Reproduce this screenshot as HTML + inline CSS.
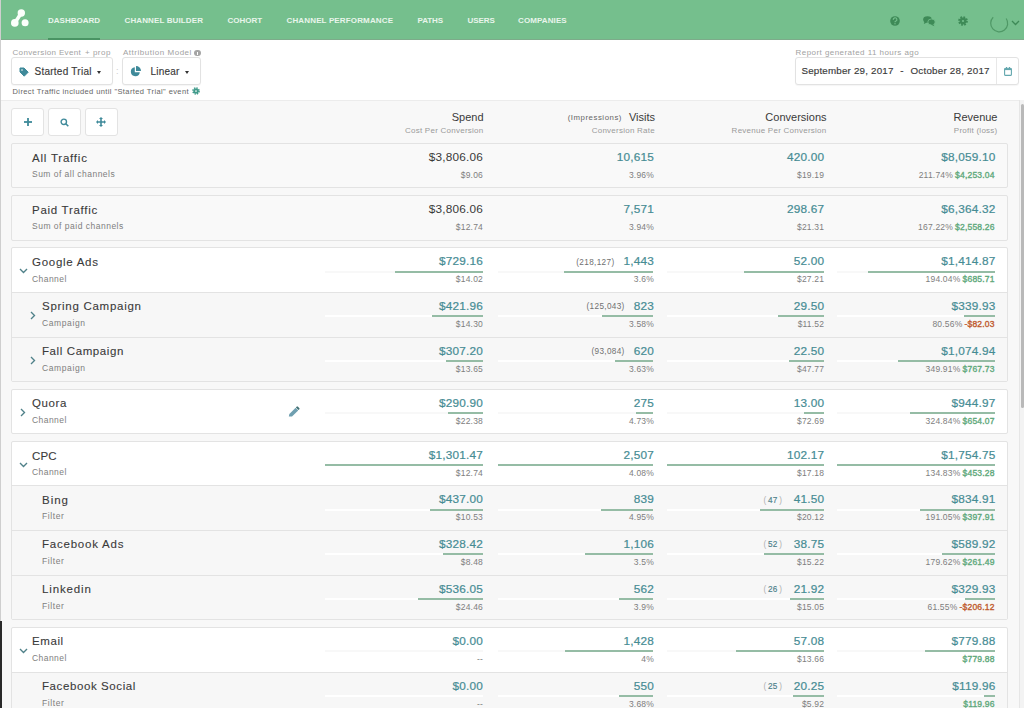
<!DOCTYPE html>
<html><head><meta charset="utf-8"><style>
*{box-sizing:border-box}
html,body{margin:0;padding:0}
body{width:1024px;height:708px;overflow:hidden;position:relative;background:#f8f8f8;font-family:"Liberation Sans",sans-serif;color:#3a3a3a}
div{position:absolute;white-space:nowrap}
svg{display:block}
.nav{left:0;top:0;width:1024px;height:40px;background:#75bf8d;border-bottom:1px solid #7dab8a}
.navi{top:13.5px;font-size:8px;font-weight:700;color:#e8f5eb;line-height:14px}
.hdr{left:0;top:40px;width:1024px;height:61px;background:#fff;border-bottom:1px solid #ececec}
.lbl{font-size:8px;color:#a2a2a2;line-height:10px}
.box{background:#fff;border:1px solid #e2e2e2;border-radius:3px;box-shadow:0 1px 1px rgba(0,0,0,.04)}
.card{left:11px;width:997px;border:1px solid #e3e3e3;border-radius:2px}
.sep{left:12px;width:995px;height:1px;background:#e3e3e3}
.subbg{left:12px;width:995px;background:#f7f7f7}
.title{font-size:11.5px;letter-spacing:0.78px;line-height:14px;color:#3a3a3a;-webkit-text-stroke:0.1px #3a3a3a}
.subt{font-size:8.5px;letter-spacing:0.4px;line-height:11px;color:#7e7e7e}
.val{font-size:11.8px;letter-spacing:0.2px;line-height:14px;text-align:right;-webkit-text-stroke:0.2px currentColor}
.pre{font-size:8.2px;color:#707070;letter-spacing:0.35px;margin-right:9px;position:relative;top:-0.5px;-webkit-text-stroke:0}
.pre2{font-size:8.2px;color:#4d7f8a;letter-spacing:0.3px;margin-right:10px;position:relative;top:-0.5px;-webkit-text-stroke:0.15px #4d7f8a}
.pre2 i{font-style:normal;color:#b0b0b0;-webkit-text-stroke:0;margin:0 1.5px}
.small{font-size:8.5px;letter-spacing:0.2px;line-height:11px;color:#7e7e7e;text-align:right}
.small b{font-weight:400;-webkit-text-stroke:0.35px currentColor}
.track{height:2px}
.bar{height:2px;background:#95bca5}
.chev{line-height:0}
.btn{top:108px;width:33px;height:27.5px;background:#fff;border:1px solid #e3e3e3;border-radius:3px}
.sel{top:64.5px;font-size:10px;color:#3a3a3a;line-height:14px;-webkit-text-stroke:0.15px #3a3a3a}
.ch{font-size:11px;color:#3a3a3a;line-height:14px;text-align:right}
.chs{top:125.5px;font-size:8px;color:#9a9a9a;line-height:10px;text-align:right;letter-spacing:0.25px}
</style></head><body>
<div class="nav"></div>
<div style="left:48px;top:38.3px;width:52px;height:2px;background:#4a9463"></div>
<div style="left:6px;top:4px"><svg width="30" height="30" viewBox="0 0 30 30"><line x1="15.3" y1="9" x2="8.8" y2="18.9" stroke="#fbfffb" stroke-width="3.6"/><circle cx="15.3" cy="9" r="3.7" fill="#fbfffb"/><circle cx="8.8" cy="18.9" r="3.8" fill="#fbfffb"/><circle cx="19.1" cy="18.7" r="3.5" fill="#fbfffb"/></svg></div>
<div class="navi" style="left:48px">DASHBOARD</div>
<div class="navi" style="left:124.5px;letter-spacing:0.12px">CHANNEL BUILDER</div>
<div class="navi" style="left:227.5px">COHORT</div>
<div class="navi" style="left:286.5px;letter-spacing:0.15px">CHANNEL PERFORMANCE</div>
<div class="navi" style="left:417.5px;letter-spacing:-0.1px">PATHS</div>
<div class="navi" style="left:467.5px;letter-spacing:-0.05px">USERS</div>
<div class="navi" style="left:518px;letter-spacing:0.1px">COMPANIES</div>
<div style="left:889.5px;top:15.5px"><svg width="10" height="10" viewBox="0 0 10 10"><circle cx="5" cy="5" r="4.8" fill="#3e8a57"/><path d="M3.3 3.9 A1.8 1.8 0 1 1 5.6 5.3 Q5 5.6 5 6.3" fill="none" stroke="#75bf8d" stroke-width="1.2"/><circle cx="5" cy="7.8" r="0.7" fill="#75bf8d"/></svg></div>
<div style="left:922px;top:15px"><svg width="14" height="12" viewBox="0 0 14 12"><ellipse cx="5.5" cy="4.5" rx="4.3" ry="3.3" fill="#3e8a57"/><path d="M2.5 6.5 L1.8 9 L5 7.5 Z" fill="#3e8a57"/><ellipse cx="9.5" cy="7" rx="3.7" ry="3" fill="#3e8a57" stroke="#75bf8d" stroke-width="0.8"/><path d="M11 9 L12.5 11.2 L9 9.8 Z" fill="#3e8a57"/></svg></div>
<div style="left:956.5px;top:14.5px"><svg width="12" height="12" viewBox="0 0 12 12"><circle cx="6" cy="6" r="3.9" fill="none" stroke="#3e8a57" stroke-width="1.9" stroke-dasharray="1.7 1.36"/><circle cx="6" cy="6" r="3.4" fill="#3e8a57"/><circle cx="6" cy="6" r="1.1" fill="#75bf8d"/></svg></div>
<div style="left:989px;top:13px"><svg width="22" height="20" viewBox="0 0 22 20"><path d="M17.2 5.5 A8.5 8.5 0 1 1 4.2 4.3" fill="none" stroke="#4f9866" stroke-width="1.2"/></svg></div>
<div style="left:1011px;top:20px"><svg width="9" height="6" viewBox="0 0 9 6"><path d="M1 1 L4.5 4.5 L8 1" fill="none" stroke="#3e8a57" stroke-width="1.3"/></svg></div>

<div class="hdr"></div>
<div class="lbl" style="left:12.5px;top:47.5px;letter-spacing:0.34px">Conversion Event</div>
<div class="lbl" style="left:85px;top:47.5px;letter-spacing:0.5px">+ prop</div>
<div class="lbl" style="left:123px;top:47.5px;letter-spacing:0.52px">Attribution Model</div>
<div style="left:194px;top:49.5px;width:6.5px;height:6.5px;border-radius:50%;background:#a5a5a5"></div>
<div style="left:196.7px;top:51.5px;width:1px;height:3px;background:#fff"></div>
<div class="box" style="left:11px;top:57px;width:102px;height:28px"></div>
<div class="box" style="left:121.5px;top:57px;width:79px;height:28px"></div>
<div style="left:19px;top:67px"><svg width="10" height="10" viewBox="0 0 10 10"><path d="M1 1 H5 L9.2 5.2 L5.2 9.2 L1 5 Z" fill="#3f8a9a" stroke="#3f8a9a" stroke-width="1" stroke-linejoin="round"/><circle cx="3" cy="3" r="0.8" fill="#fff"/></svg></div>
<div class="sel" style="left:34.5px;letter-spacing:0.25px">Started Trial</div>
<div style="left:96.5px;top:70.5px;width:0;height:0;border-left:2.5px solid transparent;border-right:2.5px solid transparent;border-top:3px solid #333"></div>
<div style="left:116px;top:65px;font-size:9px;color:#ccc;line-height:12px">:</div>
<div style="left:130px;top:66px"><svg width="11" height="11" viewBox="0 0 11 11"><path d="M4.8 1.2 A4.5 4.5 0 1 0 9.8 6.2 H4.8 Z" fill="#3f8a9a"/><path d="M6 0 A5 5 0 0 1 11 5 H6 Z" fill="#3f8a9a"/></svg></div>
<div class="sel" style="left:150.5px;letter-spacing:0.2px">Linear</div>
<div style="left:185px;top:70.5px;width:0;height:0;border-left:2.5px solid transparent;border-right:2.5px solid transparent;border-top:3px solid #333"></div>
<div style="left:12.5px;top:86.5px;font-size:7.5px;color:#666;line-height:10px;letter-spacing:0.4px">Direct Traffic included until "Started Trial" event</div>
<div style="left:192px;top:87px"><svg width="8" height="8" viewBox="0 0 12 12"><circle cx="6" cy="6" r="4.5" fill="none" stroke="#3f9a8a" stroke-width="2.4" stroke-dasharray="2.1 1.43"/><circle cx="6" cy="6" r="3.9" fill="#3f9a8a"/><circle cx="6" cy="6" r="1.3" fill="#fff"/></svg></div>

<div class="lbl" style="left:795.5px;top:47.5px;letter-spacing:0.45px">Report generated 11 hours ago</div>
<div class="box" style="left:794.5px;top:57px;width:224px;height:28px"></div>
<div style="left:996px;top:58px;width:1px;height:26px;background:#e8e8e8"></div>
<div class="sel" style="left:801.5px;top:64px;font-size:9.8px;letter-spacing:0.18px">September 29, 2017</div>
<div class="sel" style="left:900.3px;top:64px;font-size:9.8px">-</div>
<div class="sel" style="left:910.5px;top:64px;font-size:9.8px;letter-spacing:0.22px">October 28, 2017</div>
<div style="left:1003.5px;top:66.5px"><svg width="8" height="9" viewBox="0 0 8 9"><rect x="0.6" y="1.3" width="6.8" height="7.1" rx="1" fill="none" stroke="#63a7ae" stroke-width="1.1"/><rect x="0.6" y="1.3" width="6.8" height="1.8" fill="#63a7ae"/><rect x="2" y="0" width="1" height="2" fill="#63a7ae"/><rect x="5" y="0" width="1" height="2" fill="#63a7ae"/></svg></div>

<div style="left:1018.5px;top:100px;width:5.5px;height:608px;background:#f3f3f3;border-left:1px solid #e6e6e6"></div>
<div style="left:1020.5px;top:104px;width:3.5px;height:304px;background:#b9b9b9;border-radius:2px"></div>

<div class="btn" style="left:11px"></div>
<div class="btn" style="left:47.5px"></div>
<div class="btn" style="left:84.5px"></div>
<div style="left:23.5px;top:118px"><svg width="8" height="8" viewBox="0 0 8 8"><rect x="3.1" y="0" width="1.8" height="8" fill="#3f8a9a"/><rect x="0" y="3.1" width="8" height="1.8" fill="#3f8a9a"/></svg></div>
<div style="left:59.5px;top:117.5px"><svg width="9" height="9" viewBox="0 0 9 9"><circle cx="3.8" cy="3.8" r="2.7" fill="none" stroke="#3f8a9a" stroke-width="1.4"/><line x1="5.8" y1="5.8" x2="8.3" y2="8.3" stroke="#3f8a9a" stroke-width="1.6"/></svg></div>
<div style="left:96px;top:117px"><svg width="10" height="10" viewBox="0 0 10 10"><path d="M5 0 L7 2 H5.8 V4.2 H8 V3 L10 5 L8 7 V5.8 H5.8 V8 H7 L5 10 L3 8 H4.2 V5.8 H2 V7 L0 5 L2 3 V4.2 H4.2 V2 H3 Z" fill="#3f8a9a"/></svg></div>

<div class="ch" style="right:540.5px;top:110px">Spend</div>
<div class="chs" style="right:540.5px">Cost Per Conversion</div>
<div class="ch" style="right:369px;top:110px">Visits</div>
<div class="ch" style="right:402px;top:111px;font-size:7.8px;color:#666;letter-spacing:0.55px">(Impressions)</div>
<div class="chs" style="right:369px">Conversion Rate</div>
<div class="ch" style="right:197.5px;top:110px">Conversions</div>
<div class="chs" style="right:197.5px">Revenue Per Conversion</div>
<div class="ch" style="right:26.5px;top:110px">Revenue</div>
<div class="chs" style="right:26.5px">Profit (loss)</div>

<div class="card" style="top:143.1px;height:45.2px;background:#f9f9f9"></div>
<div class="title" style="left:32px;top:150.6px;letter-spacing:0.78px">All Traffic</div>
<div class="subt" style="left:32px;top:169.3px;letter-spacing:0.47px">Sum of all channels</div>
<div class="val" style="right:541px;top:150.1px;color:#3a3a3a;-webkit-text-stroke:0">$3,806.06</div>
<div class="small" style="right:541px;top:170.1px">$9.06</div>
<div class="val" style="right:370px;top:150.1px;color:#468c94">10,615</div>
<div class="small" style="right:370px;top:170.1px">3.96%</div>
<div class="val" style="right:199.79999999999995px;top:150.1px;color:#468c94">420.00</div>
<div class="small" style="right:199.79999999999995px;top:170.1px">$19.19</div>
<div class="val" style="right:28.5px;top:150.1px;color:#468c94">$8,059.10</div>
<div class="small" style="right:29.3px;top:170.1px"><span style="margin-right:-0.5px">211.74%</span> <b style="color:#5fa97c">$4,253.04</b></div>
<div class="card" style="top:195.2px;height:45.5px;background:#f9f9f9"></div>
<div class="title" style="left:32px;top:202.7px;letter-spacing:0.72px">Paid Traffic</div>
<div class="subt" style="left:32px;top:221.4px;letter-spacing:0.5px">Sum of paid channels</div>
<div class="val" style="right:541px;top:202.2px;color:#3a3a3a;-webkit-text-stroke:0">$3,806.06</div>
<div class="small" style="right:541px;top:222.2px">$12.74</div>
<div class="val" style="right:370px;top:202.2px;color:#468c94">7,571</div>
<div class="small" style="right:370px;top:222.2px">3.94%</div>
<div class="val" style="right:199.79999999999995px;top:202.2px;color:#468c94">298.67</div>
<div class="small" style="right:199.79999999999995px;top:222.2px">$21.31</div>
<div class="val" style="right:28.5px;top:202.2px;color:#468c94">$6,364.32</div>
<div class="small" style="right:29.3px;top:222.2px"><span style="margin-right:-0.5px">167.22%</span> <b style="color:#5fa97c">$2,558.26</b></div>
<div class="card" style="top:247.3px;height:134.7px;background:#fff"></div>
<div class="subbg" style="top:291.8px;height:89.2px"></div>
<div class="sep" style="top:291.8px"></div>
<div class="sep" style="top:336.7px"></div>
<div class="title" style="left:32px;top:254.8px;letter-spacing:0.72px">Google Ads</div>
<div class="subt" style="left:32px;top:273.5px;letter-spacing:0.44px">Channel</div>
<div class="chev" style="left:19px;top:268.3px"><svg width="9" height="6" viewBox="0 0 9 6"><path d="M1 1 L4.5 4.5 L8 1" fill="none" stroke="#4f8189" stroke-width="1.35"/></svg></div>
<div class="val" style="right:541px;top:254.3px;color:#468c94">$729.16</div>
<div class="small" style="right:541px;top:274.3px">$14.02</div>
<div class="track" style="left:325.4px;top:270.6px;width:157.5px;background:#f8f8f8"></div>
<div class="bar" style="left:394.7px;top:270.6px;width:88.2px"></div>
<div class="val" style="right:370px;top:254.3px;color:#468c94"><span class="pre">(218,127)</span>1,443</div>
<div class="small" style="right:370px;top:274.3px">3.6%</div>
<div class="track" style="left:497.9px;top:270.6px;width:155.4px;background:#f8f8f8"></div>
<div class="bar" style="left:563.9px;top:270.6px;width:89.4px"></div>
<div class="val" style="right:199.79999999999995px;top:254.3px;color:#468c94">52.00</div>
<div class="small" style="right:199.79999999999995px;top:274.3px">$27.21</div>
<div class="track" style="left:666.7px;top:270.6px;width:157.1px;background:#f8f8f8"></div>
<div class="bar" style="left:743.8px;top:270.6px;width:80.0px"></div>
<div class="val" style="right:28.5px;top:254.3px;color:#468c94">$1,414.87</div>
<div class="small" style="right:29.3px;top:274.3px"><span style="margin-right:-0.5px">194.04%</span> <b style="color:#5fa97c">$685.71</b></div>
<div class="track" style="left:837.3px;top:270.6px;width:157.3px;background:#f8f8f8"></div>
<div class="bar" style="left:867.8px;top:270.6px;width:126.8px"></div>
<div class="title" style="left:42px;top:299.3px;letter-spacing:0.72px">Spring Campaign</div>
<div class="subt" style="left:42px;top:318.0px;letter-spacing:0.6px">Campaign</div>
<div class="chev" style="left:29.6px;top:311.1px"><svg width="6" height="9" viewBox="0 0 6 9"><path d="M1 1 L4.5 4.5 L1 8" fill="none" stroke="#4f8189" stroke-width="1.35"/></svg></div>
<div class="val" style="right:541px;top:298.8px;color:#468c94">$421.96</div>
<div class="small" style="right:541px;top:318.8px">$14.30</div>
<div class="track" style="left:325.4px;top:315.1px;width:157.5px;background:#fff"></div>
<div class="bar" style="left:431.8px;top:315.1px;width:51.1px"></div>
<div class="val" style="right:370px;top:298.8px;color:#468c94"><span class="pre">(125,043)</span>823</div>
<div class="small" style="right:370px;top:318.8px">3.58%</div>
<div class="track" style="left:497.9px;top:315.1px;width:155.4px;background:#fff"></div>
<div class="bar" style="left:602.3px;top:315.1px;width:51.0px"></div>
<div class="val" style="right:199.79999999999995px;top:298.8px;color:#468c94">29.50</div>
<div class="small" style="right:199.79999999999995px;top:318.8px">$11.52</div>
<div class="track" style="left:666.7px;top:315.1px;width:157.1px;background:#fff"></div>
<div class="bar" style="left:778.4px;top:315.1px;width:45.4px"></div>
<div class="val" style="right:28.5px;top:298.8px;color:#468c94">$339.93</div>
<div class="small" style="right:29.3px;top:318.8px"><span style="margin-right:-0.5px">80.56%</span> <b style="color:#c05a2e">-$82.03</b></div>
<div class="track" style="left:837.3px;top:315.1px;width:157.3px;background:#fff"></div>
<div class="bar" style="left:964.1px;top:315.1px;width:30.5px"></div>
<div class="title" style="left:42px;top:344.2px;letter-spacing:0.6px">Fall Campaign</div>
<div class="subt" style="left:42px;top:362.9px;letter-spacing:0.6px">Campaign</div>
<div class="chev" style="left:29.6px;top:356.0px"><svg width="6" height="9" viewBox="0 0 6 9"><path d="M1 1 L4.5 4.5 L1 8" fill="none" stroke="#4f8189" stroke-width="1.35"/></svg></div>
<div class="val" style="right:541px;top:343.7px;color:#468c94">$307.20</div>
<div class="small" style="right:541px;top:363.7px">$13.65</div>
<div class="track" style="left:325.4px;top:360.0px;width:157.5px;background:#fff"></div>
<div class="bar" style="left:445.7px;top:360.0px;width:37.2px"></div>
<div class="val" style="right:370px;top:343.7px;color:#468c94"><span class="pre">(93,084)</span>620</div>
<div class="small" style="right:370px;top:363.7px">3.63%</div>
<div class="track" style="left:497.9px;top:360.0px;width:155.4px;background:#fff"></div>
<div class="bar" style="left:614.9px;top:360.0px;width:38.4px"></div>
<div class="val" style="right:199.79999999999995px;top:343.7px;color:#468c94">22.50</div>
<div class="small" style="right:199.79999999999995px;top:363.7px">$47.77</div>
<div class="track" style="left:666.7px;top:360.0px;width:157.1px;background:#fff"></div>
<div class="bar" style="left:789.2px;top:360.0px;width:34.6px"></div>
<div class="val" style="right:28.5px;top:343.7px;color:#468c94">$1,074.94</div>
<div class="small" style="right:29.3px;top:363.7px"><span style="margin-right:-0.5px">349.91%</span> <b style="color:#5fa97c">$767.73</b></div>
<div class="track" style="left:837.3px;top:360.0px;width:157.3px;background:#fff"></div>
<div class="bar" style="left:898.2px;top:360.0px;width:96.4px"></div>
<div class="card" style="top:388.9px;height:45.1px;background:#fff"></div>
<div class="title" style="left:32px;top:396.4px;letter-spacing:0.6px">Quora</div>
<div class="subt" style="left:32px;top:415.1px;letter-spacing:0.44px">Channel</div>
<div class="chev" style="left:19.7px;top:408.2px"><svg width="6" height="9" viewBox="0 0 6 9"><path d="M1 1 L4.5 4.5 L1 8" fill="none" stroke="#4f8189" stroke-width="1.35"/></svg></div>
<div class="val" style="right:541px;top:395.9px;color:#468c94">$290.90</div>
<div class="small" style="right:541px;top:415.9px">$22.38</div>
<div class="track" style="left:325.4px;top:412.2px;width:157.5px;background:#f8f8f8"></div>
<div class="bar" style="left:447.7px;top:412.2px;width:35.2px"></div>
<div class="val" style="right:370px;top:395.9px;color:#468c94">275</div>
<div class="small" style="right:370px;top:415.9px">4.73%</div>
<div class="track" style="left:497.9px;top:412.2px;width:155.4px;background:#f8f8f8"></div>
<div class="bar" style="left:636.3px;top:412.2px;width:17.0px"></div>
<div class="val" style="right:199.79999999999995px;top:395.9px;color:#468c94">13.00</div>
<div class="small" style="right:199.79999999999995px;top:415.9px">$72.69</div>
<div class="track" style="left:666.7px;top:412.2px;width:157.1px;background:#f8f8f8"></div>
<div class="bar" style="left:803.8px;top:412.2px;width:20.0px"></div>
<div class="val" style="right:28.5px;top:395.9px;color:#468c94">$944.97</div>
<div class="small" style="right:29.3px;top:415.9px"><span style="margin-right:-0.5px">324.84%</span> <b style="color:#5fa97c">$654.07</b></div>
<div class="track" style="left:837.3px;top:412.2px;width:157.3px;background:#f8f8f8"></div>
<div class="bar" style="left:909.9px;top:412.2px;width:84.7px"></div>
<div style="position:absolute;left:288px;top:405.9px"><svg width="12" height="12" viewBox="0 0 12 12"><path d="M0.8 10.6 L1.4 8 L7.6 1.8 L10.2 4.4 L4 10.6 Z" fill="#6f9fb0"/><path d="M7.9 1.5 L8.8 0.6 Q9.3 0.2 9.8 0.6 L11.4 2.2 Q11.8 2.7 11.4 3.2 L10.5 4.1 Z" fill="#3f6f72"/></svg></div>
<div class="card" style="top:441.0px;height:178.8px;background:#fff"></div>
<div class="subbg" style="top:485.2px;height:133.6px"></div>
<div class="sep" style="top:485.2px"></div>
<div class="sep" style="top:529.8px"></div>
<div class="sep" style="top:574.5px"></div>
<div class="title" style="left:32px;top:448.5px;letter-spacing:0.1px">CPC</div>
<div class="subt" style="left:32px;top:467.2px;letter-spacing:0.44px">Channel</div>
<div class="chev" style="left:19px;top:462.0px"><svg width="9" height="6" viewBox="0 0 9 6"><path d="M1 1 L4.5 4.5 L8 1" fill="none" stroke="#4f8189" stroke-width="1.35"/></svg></div>
<div class="val" style="right:541px;top:448.0px;color:#468c94">$1,301.47</div>
<div class="small" style="right:541px;top:468.0px">$12.74</div>
<div class="track" style="left:325.4px;top:464.3px;width:157.5px;background:#f8f8f8"></div>
<div class="bar" style="left:325.4px;top:464.3px;width:157.5px"></div>
<div class="val" style="right:370px;top:448.0px;color:#468c94">2,507</div>
<div class="small" style="right:370px;top:468.0px">4.08%</div>
<div class="track" style="left:497.9px;top:464.3px;width:155.4px;background:#f8f8f8"></div>
<div class="bar" style="left:497.9px;top:464.3px;width:155.4px"></div>
<div class="val" style="right:199.79999999999995px;top:448.0px;color:#468c94">102.17</div>
<div class="small" style="right:199.79999999999995px;top:468.0px">$17.18</div>
<div class="track" style="left:666.7px;top:464.3px;width:157.1px;background:#f8f8f8"></div>
<div class="bar" style="left:666.7px;top:464.3px;width:157.1px"></div>
<div class="val" style="right:28.5px;top:448.0px;color:#468c94">$1,754.75</div>
<div class="small" style="right:29.3px;top:468.0px"><span style="margin-right:-0.5px">134.83%</span> <b style="color:#5fa97c">$453.28</b></div>
<div class="track" style="left:837.3px;top:464.3px;width:157.3px;background:#f8f8f8"></div>
<div class="bar" style="left:837.3px;top:464.3px;width:157.3px"></div>
<div class="title" style="left:42px;top:492.7px;letter-spacing:1.0px">Bing</div>
<div class="subt" style="left:42px;top:511.4px;letter-spacing:0.6px">Filter</div>
<div class="val" style="right:541px;top:492.2px;color:#468c94">$437.00</div>
<div class="small" style="right:541px;top:512.2px">$10.53</div>
<div class="track" style="left:325.4px;top:508.5px;width:157.5px;background:#fff"></div>
<div class="bar" style="left:430.0px;top:508.5px;width:52.9px"></div>
<div class="val" style="right:370px;top:492.2px;color:#468c94">839</div>
<div class="small" style="right:370px;top:512.2px">4.95%</div>
<div class="track" style="left:497.9px;top:508.5px;width:155.4px;background:#fff"></div>
<div class="bar" style="left:601.3px;top:508.5px;width:52.0px"></div>
<div class="val" style="right:199.79999999999995px;top:492.2px;color:#468c94"><span class="pre2"><i>(</i>47<i>)</i></span>41.50</div>
<div class="small" style="right:199.79999999999995px;top:512.2px">$20.12</div>
<div class="track" style="left:666.7px;top:508.5px;width:157.1px;background:#fff"></div>
<div class="bar" style="left:760.0px;top:508.5px;width:63.8px"></div>
<div class="val" style="right:28.5px;top:492.2px;color:#468c94">$834.91</div>
<div class="small" style="right:29.3px;top:512.2px"><span style="margin-right:-0.5px">191.05%</span> <b style="color:#5fa97c">$397.91</b></div>
<div class="track" style="left:837.3px;top:508.5px;width:157.3px;background:#fff"></div>
<div class="bar" style="left:919.8px;top:508.5px;width:74.8px"></div>
<div class="title" style="left:42px;top:537.3px;letter-spacing:0.78px">Facebook Ads</div>
<div class="subt" style="left:42px;top:556.0px;letter-spacing:0.6px">Filter</div>
<div class="val" style="right:541px;top:536.8px;color:#468c94">$328.42</div>
<div class="small" style="right:541px;top:556.8px">$8.48</div>
<div class="track" style="left:325.4px;top:553.1px;width:157.5px;background:#fff"></div>
<div class="bar" style="left:443.2px;top:553.1px;width:39.7px"></div>
<div class="val" style="right:370px;top:536.8px;color:#468c94">1,106</div>
<div class="small" style="right:370px;top:556.8px">3.5%</div>
<div class="track" style="left:497.9px;top:553.1px;width:155.4px;background:#fff"></div>
<div class="bar" style="left:584.7px;top:553.1px;width:68.6px"></div>
<div class="val" style="right:199.79999999999995px;top:536.8px;color:#468c94"><span class="pre2"><i>(</i>52<i>)</i></span>38.75</div>
<div class="small" style="right:199.79999999999995px;top:556.8px">$15.22</div>
<div class="track" style="left:666.7px;top:553.1px;width:157.1px;background:#fff"></div>
<div class="bar" style="left:764.2px;top:553.1px;width:59.6px"></div>
<div class="val" style="right:28.5px;top:536.8px;color:#468c94">$589.92</div>
<div class="small" style="right:29.3px;top:556.8px"><span style="margin-right:-0.5px">179.62%</span> <b style="color:#5fa97c">$261.49</b></div>
<div class="track" style="left:837.3px;top:553.1px;width:157.3px;background:#fff"></div>
<div class="bar" style="left:941.7px;top:553.1px;width:52.9px"></div>
<div class="title" style="left:42px;top:582.0px;letter-spacing:0.85px">Linkedin</div>
<div class="subt" style="left:42px;top:600.7px;letter-spacing:0.6px">Filter</div>
<div class="val" style="right:541px;top:581.5px;color:#468c94">$536.05</div>
<div class="small" style="right:541px;top:601.5px">$24.46</div>
<div class="track" style="left:325.4px;top:597.8px;width:157.5px;background:#fff"></div>
<div class="bar" style="left:418.0px;top:597.8px;width:64.9px"></div>
<div class="val" style="right:370px;top:581.5px;color:#468c94">562</div>
<div class="small" style="right:370px;top:601.5px">3.9%</div>
<div class="track" style="left:497.9px;top:597.8px;width:155.4px;background:#fff"></div>
<div class="bar" style="left:618.5px;top:597.8px;width:34.8px"></div>
<div class="val" style="right:199.79999999999995px;top:581.5px;color:#468c94"><span class="pre2"><i>(</i>26<i>)</i></span>21.92</div>
<div class="small" style="right:199.79999999999995px;top:601.5px">$15.05</div>
<div class="track" style="left:666.7px;top:597.8px;width:157.1px;background:#fff"></div>
<div class="bar" style="left:790.1px;top:597.8px;width:33.7px"></div>
<div class="val" style="right:28.5px;top:581.5px;color:#468c94">$329.93</div>
<div class="small" style="right:29.3px;top:601.5px"><span style="margin-right:-0.5px">61.55%</span> <b style="color:#c05a2e">-$206.12</b></div>
<div class="track" style="left:837.3px;top:597.8px;width:157.3px;background:#fff"></div>
<div class="bar" style="left:965.0px;top:597.8px;width:29.6px"></div>
<div class="card" style="top:626.5px;height:90.7px;background:#fff"></div>
<div class="subbg" style="top:671.7px;height:44.5px"></div>
<div class="sep" style="top:671.7px"></div>
<div class="title" style="left:32px;top:634.0px;letter-spacing:0.6px">Email</div>
<div class="subt" style="left:32px;top:652.7px;letter-spacing:0.44px">Channel</div>
<div class="chev" style="left:19px;top:647.5px"><svg width="9" height="6" viewBox="0 0 9 6"><path d="M1 1 L4.5 4.5 L8 1" fill="none" stroke="#4f8189" stroke-width="1.35"/></svg></div>
<div class="val" style="right:541px;top:633.5px;color:#468c94">$0.00</div>
<div class="small" style="right:541px;top:653.5px">--</div>
<div class="track" style="left:325.4px;top:649.8px;width:157.5px;background:#f8f8f8"></div>
<div class="val" style="right:370px;top:633.5px;color:#468c94">1,428</div>
<div class="small" style="right:370px;top:653.5px">4%</div>
<div class="track" style="left:497.9px;top:649.8px;width:155.4px;background:#f8f8f8"></div>
<div class="bar" style="left:564.8px;top:649.8px;width:88.5px"></div>
<div class="val" style="right:199.79999999999995px;top:633.5px;color:#468c94">57.08</div>
<div class="small" style="right:199.79999999999995px;top:653.5px">$13.66</div>
<div class="track" style="left:666.7px;top:649.8px;width:157.1px;background:#f8f8f8"></div>
<div class="bar" style="left:736.0px;top:649.8px;width:87.8px"></div>
<div class="val" style="right:28.5px;top:633.5px;color:#468c94">$779.88</div>
<div class="small" style="right:29.3px;top:653.5px"><b style="color:#5fa97c">$779.88</b></div>
<div class="track" style="left:837.3px;top:649.8px;width:157.3px;background:#f8f8f8"></div>
<div class="bar" style="left:924.7px;top:649.8px;width:69.9px"></div>
<div class="title" style="left:42px;top:679.2px;letter-spacing:0.6px">Facebook Social</div>
<div class="subt" style="left:42px;top:697.9px;letter-spacing:0.6px">Filter</div>
<div class="val" style="right:541px;top:678.7px;color:#468c94">$0.00</div>
<div class="small" style="right:541px;top:698.7px">--</div>
<div class="track" style="left:325.4px;top:695.0px;width:157.5px;background:#fff"></div>
<div class="val" style="right:370px;top:678.7px;color:#468c94">550</div>
<div class="small" style="right:370px;top:698.7px">3.68%</div>
<div class="track" style="left:497.9px;top:695.0px;width:155.4px;background:#fff"></div>
<div class="bar" style="left:619.2px;top:695.0px;width:34.1px"></div>
<div class="val" style="right:199.79999999999995px;top:678.7px;color:#468c94"><span class="pre2"><i>(</i>25<i>)</i></span>20.25</div>
<div class="small" style="right:199.79999999999995px;top:698.7px">$5.92</div>
<div class="track" style="left:666.7px;top:695.0px;width:157.1px;background:#fff"></div>
<div class="bar" style="left:792.7px;top:695.0px;width:31.1px"></div>
<div class="val" style="right:28.5px;top:678.7px;color:#468c94">$119.96</div>
<div class="small" style="right:29.3px;top:698.7px"><b style="color:#5fa97c">$119.96</b></div>
<div class="track" style="left:837.3px;top:695.0px;width:157.3px;background:#fff"></div>
<div class="bar" style="left:983.8px;top:695.0px;width:10.8px"></div>
<div style="left:0;top:0;width:1px;height:708px;background:#cfcfcf"></div>
<div style="left:0;top:621px;width:1.5px;height:87px;background:#2a2a2a"></div>
</body></html>
